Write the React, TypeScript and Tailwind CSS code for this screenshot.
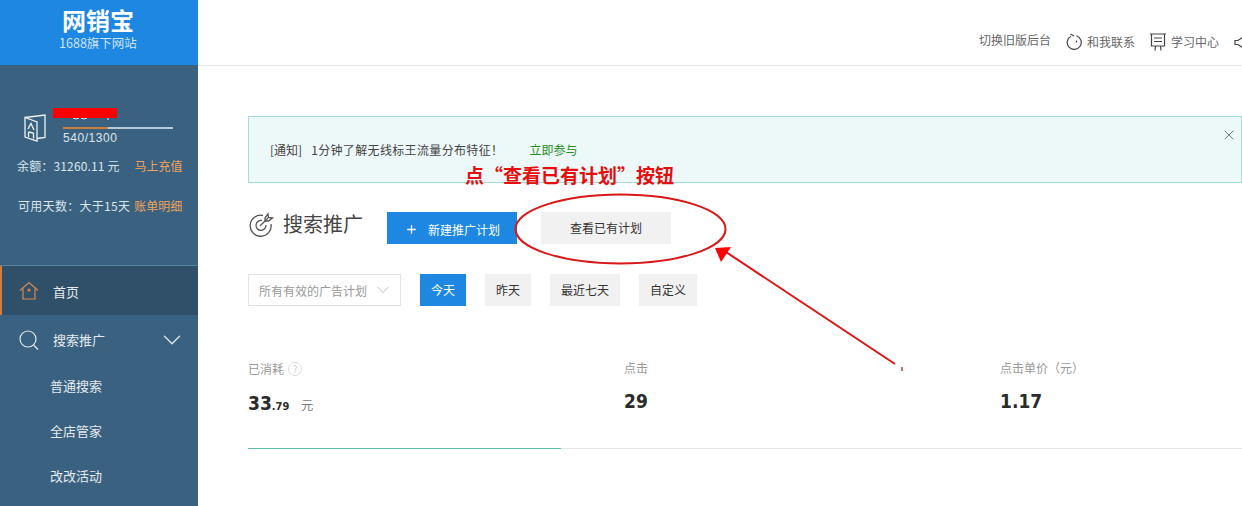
import type { ReactNode } from 'react';
import { ChevronDown, Plus, X } from 'lucide-react';

const font = 'font-["Noto_Sans_CJK_SC","Liberation_Sans",sans-serif]';

const subMenu = ['普通搜索', '全店管家', '改改活动'];

const ranges = [
  { label: '今天', width: 'w-[46px]', active: true },
  { label: '昨天', width: 'w-[46px]', active: false },
  { label: '最近七天', width: 'w-[70px]', active: false },
  { label: '自定义', width: 'w-[58px]', active: false },
];

const Sidebar = () => (
  <aside className="w-[198px] h-[506px] shrink-0 bg-[#3a6180] overflow-hidden">
    <div className="h-[65px] bg-[#1e87e2] flex flex-col items-center pt-[6px] pr-[2px] text-white">
      <div className="text-[24px] leading-[28px] font-bold">网销宝</div>
      <div className="text-[12.5px] leading-[14px] text-[#cfe5f8] mt-[2px]">1688旗下网站</div>
    </div>

    {/* ACCOUNT */}
    <div className="relative h-[201px] border-b border-[#54809f] text-[12px] text-[#dbe5ec]">
      <svg className="absolute left-[24px] top-[49px]" width="23" height="28" viewBox="0 0 23 28" fill="none" stroke="#eef3f6" strokeWidth="1.3">
        <path d="M1 3.5 L13 8 V27 L1 23 Z" />
        <path d="M1 3.5 L21 1 V23.5 L13 24.5" />
        <path d="M4 15 L7 9.500 L10 16" />
        <path d="M4.500 18 V23 M9.500 19 V24.500 M4.500 18 L9.500 19" />
      </svg>
      <svg className="absolute left-[73px] top-[51px]" width="36" height="4" viewBox="0 0 36 4" fill="none" stroke="#e6edf2" strokeWidth="1">
        <path d="M0 2 Q3 4 6 2 M8 2 Q11 4 14 2 M35 0 V4" />
      </svg>
      <div className="absolute left-[53px] top-[43px] w-[64px] h-[10px] bg-[#ff0000]" />
      <div className="absolute left-[63px] top-[62px] w-[110px] h-[2px] bg-[#b8cad8]">
        <div className="w-[45px] h-[2px] bg-[#c9803f]" />
      </div>
      <div className="absolute left-[63px] top-[64px] leading-[18px] font-['Liberation_Sans'] tracking-[0.55px]">540/1300</div>
      <div className="absolute left-[17px] top-[91px] leading-[20px] flex whitespace-nowrap">
        <span className="tracking-[0.15px]">余额：31260.11 元</span>
        <span className="ml-[15px] text-[#f0a35c]">马上充值</span>
      </div>
      <div className="absolute left-[18px] top-[131px] leading-[20px] flex whitespace-nowrap">
        <span className="tracking-[0.3px]">可用天数：大于15天</span>
        <span className="ml-[4px] text-[#f0a35c]">账单明细</span>
      </div>
    </div>

    {/* MENU */}
    <nav className="text-[13px] text-[#e4ebf0]">
      <div className="h-[49px] bg-[#2f5068] border-l-2 border-[#d07f3e] flex items-center pl-[17px]">
        <svg width="20" height="19" viewBox="0 0 20 19" fill="none" stroke="#d88b4e" strokeWidth="1.2">
          <path d="M1 9.5 L10 1.5 L19 9.5" />
          <path d="M4 7.5 V18 H16 V7.5" />
          <circle cx="10" cy="9" r="1" />
        </svg>
        <span className="ml-[14px] mt-[3px]">首页</span>
      </div>
      <div className="h-[49px] flex items-center pl-[19px]">
        <svg width="20" height="20" viewBox="0 0 20 20" fill="none" stroke="#dfe8ee" strokeWidth="1.2">
          <circle cx="9" cy="9" r="8" />
          <path d="M14.500 15 L19 19.500" />
        </svg>
        <span className="ml-[14px]">搜索推广</span>
        <ChevronDown className="w-[30px] h-[30px] ml-[52px] text-[#dfe8ee] shrink-0" strokeWidth={1} />
      </div>
      <div className="-mt-[1px]">
        {subMenu.map((item) => (
          <div key={item} className="h-[45px] flex items-center pl-[50px]">
            {item}
          </div>
        ))}
      </div>
    </nav>
  </aside>
);

const Header = () => (
  <header className="h-[66px] border-b border-[#e6e6e6] flex items-end pb-[14px] text-[12px] text-[#666] whitespace-nowrap">
    <span className="ml-[781px] mb-[2px]">切换旧版后台</span>
    <svg className="ml-[15px] shrink-0 mb-[1px]" width="16" height="17" viewBox="0 0 16 17" fill="none" stroke="#444" strokeWidth="1.2">
      <path d="M5 3.200 A7 7 0 1 0 10.500 2.800" />
      <path d="M4.500 1 L8 3" />
      <path d="M10.500 7.500 V9.500" />
    </svg>
    <span className="ml-[5px]">和我联系</span>
    <svg className="ml-[15px] shrink-0" width="16" height="18" viewBox="0 0 16 18" fill="none" stroke="#444" strokeWidth="1.2">
      <path d="M0 1 H16 M1.500 1 V13 H14.500 V1" />
      <path d="M4 5 H12 M4 8.500 H12 M5.500 13 L5 17.500 M10.500 13 L11 17.500" />
    </svg>
    <span className="ml-[5px]">学习中心</span>
    <svg className="ml-[15px] mb-[2px] shrink-0" width="12" height="13" viewBox="0 0 12 13" fill="none" stroke="#444" strokeWidth="1.2">
      <path d="M1 4.500 H4 L9 1 V12 L4 8.500 H1 Z" />
    </svg>
  </header>
);

const Stat = ({ label, value, className }: { label: string; value: ReactNode; className: string }) => (
  <div className={className}>
    <div className="text-[12px] leading-[16px] text-[#999] flex items-center">{label}</div>
    <div className="mt-[11px] text-[19px] leading-[28px] font-bold text-[#2b2b2b] font-['DejaVu_Sans'] [font-stretch:condensed]">{value}</div>
  </div>
);

export default function App() {
  return (
    <div className={`w-[1242px] h-[506px] flex bg-white overflow-hidden relative ${font}`}>
      <Sidebar />

      <main className="flex-1 min-w-0">
        <Header />

        <div className="pl-[50px]">
          {/* NOTICE */}
          <div className="mt-[50px] h-[67px] border border-[#a5dcd8] bg-[#edf8f8] flex items-center pl-[21px] text-[12px] text-[#444] relative whitespace-nowrap">
            <span>[通知]</span>
            <span className="ml-[9px] tracking-[0.35px]">1分钟了解无线标王流量分布特征！</span>
            <span className="ml-[26px] text-[#1f8f1f]">立即参与</span>
            <X className="absolute right-[4px] top-[10px] w-[16px] h-[16px] text-[#666]" strokeWidth={1.3} />
          </div>

          {/* TITLE */}
          <div className="mt-[29px] flex items-center h-[32px] whitespace-nowrap">
            <svg className="shrink-0 -mt-[6px]" width="26" height="26" viewBox="0 0 26 26" fill="none" stroke="#555" strokeWidth="1.3">
              <path d="M15 3.500 A10.500 10.500 0 1 0 23 12" />
              <path d="M14 8.500 A5 5 0 1 0 18 13" />
              <path d="M12 14 L20 6" />
              <path d="M17 6 L20 2 L20.500 5.500 L24.500 6 L20.500 9 L17 9 Z" />
            </svg>
            <span className="ml-[9px] text-[20px] text-[#444] -mt-[9px]">搜索推广</span>
            <button className="ml-[24px] w-[130px] h-[32px] bg-[#1e87e2] text-white text-[12px] flex items-center pl-[18px]">
              <Plus className="w-[13px] h-[13px] mr-[10px] mt-[2px]" strokeWidth={2.5} />
              <span className="mt-[4px]">新建推广计划</span>
            </button>
            <button className="ml-[24px] w-[130px] h-[32px] bg-[#f1f1f1] text-[#333] text-[12px]">查看已有计划</button>
          </div>

          {/* FILTERS */}
          <div className="mt-[30px] flex items-center gap-[19px] h-[32px] whitespace-nowrap text-[12px]">
            <div className="w-[153px] h-[32px] border border-[#e3e3e3] flex items-center pl-[10px] text-[#999]">
              <span className="mt-[2px]">所有有效的广告计划</span>
              <ChevronDown className="w-[20px] h-[20px] ml-[6px] text-[#aaa] shrink-0" strokeWidth={1} />
            </div>
            {ranges.map((range) => (
              <button
                key={range.label}
                className={`${range.width} h-[32px] ${range.active ? 'bg-[#1e87e2] text-white' : 'bg-[#f1f1f1] text-[#333]'}`}
              >
                {range.label}
              </button>
            ))}
          </div>

          {/* STATS */}
          <div className="mt-[54px] flex">
            <div className="w-[376px]">
              <div className="text-[12px] leading-[16px] text-[#999] flex items-center mt-[1px]">
                已消耗
                <span className="ml-[4px] w-[14px] h-[14px] rounded-full border border-[#ddd] text-[10px] leading-[12px] text-center text-[#ccc]">?</span>
              </div>
              <div className="mt-[12px] leading-[28px] font-bold text-[#2b2b2b] font-['DejaVu_Sans'] [font-stretch:condensed] text-[19px]">
                33<span className="text-[11px]">.79</span>
                <span className={`ml-[12px] text-[12px] font-normal text-[#777] ${font}`}>元</span>
              </div>
            </div>
            <Stat className="w-[376px]" label="点击" value="29" />
            <Stat className="w-[200px]" label="点击单价（元）" value="1.17" />
          </div>

          {/* TAB LINE */}
          <div className="mt-[27px] h-[1px] bg-[#e6e6e6]">
            <div className="w-[313px] h-[1px] bg-[#5fbfae]" />
          </div>
        </div>
      </main>

      {/* ANNOTATION */}
      <div className="absolute left-[465px] top-[162px] text-[19px] leading-[26px] font-bold text-[#e60f0f] whitespace-nowrap">
        点“查看已有计划”按钮
      </div>
      <svg className="absolute left-[510px] top-[190px] pointer-events-none" width="400" height="190" viewBox="0 0 400 190" fill="none">
        <ellipse cx="110.500" cy="39" rx="105" ry="34.500" stroke="#d81818" strokeWidth="2" />
        <path d="M385 174 L216 62" stroke="#e01515" strokeWidth="2" />
        <path d="M205 58 L221 57 L211 72 Z" fill="#ff0000" />
        <path d="M392 177 V181" stroke="#b01010" strokeWidth="1.2" />
      </svg>
    </div>
  );
}
